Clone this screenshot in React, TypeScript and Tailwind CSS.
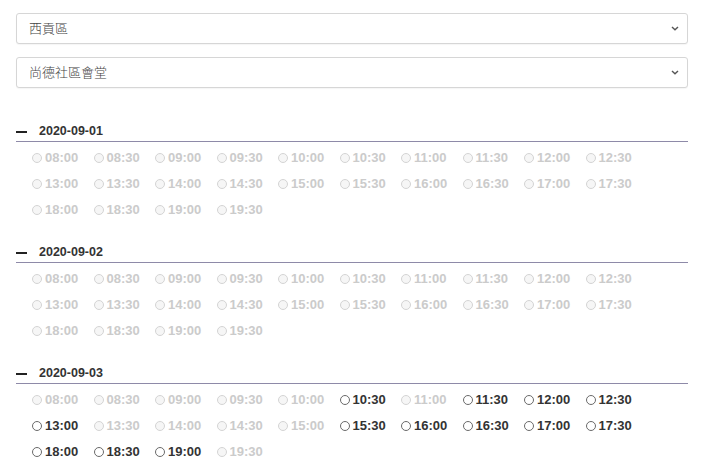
const times = [
  "08:00", "08:30", "09:00", "09:30", "10:00", "10:30", "11:00", "11:30", "12:00", "12:30",
  "13:00", "13:30", "14:00", "14:30", "15:00", "15:30", "16:00", "16:30", "17:00", "17:30",
  "18:00", "18:30", "19:00", "19:30",
];

const days = [
  { date: "2020-09-01", open: [] as string[] },
  { date: "2020-09-02", open: [] as string[] },
  {
    date: "2020-09-03",
    open: ["10:30", "11:30", "12:00", "12:30", "13:00", "15:30", "16:00", "16:30", "17:00", "17:30", "18:00", "18:30", "19:00"],
  },
];

function Picker({ label }: { label: string }) {
  return (
    <div className="flex h-[31px] items-center justify-between rounded-[3px] border border-[#d6d6d6] bg-white pl-3 pr-[5px] shadow-[0_1px_1px_rgba(0,0,0,0.04)]">
      <span className="text-[13px] font-light text-[#444]">{label}</span>
      <svg width="8" height="5" viewBox="0 0 8 5" className="mr-[3px]">
        <path d="M1 1l3 2.8L7 1" fill="none" stroke="#555" strokeWidth="1.4" />
      </svg>
    </div>
  );
}

function Slot({ time, enabled }: { time: string; enabled: boolean }) {
  return (
    <label className="flex h-[26px] items-center">
      <span
        className={
          enabled
            ? "mr-[3px] h-[10px] w-[10px] rounded-full border border-[#6a6a6a] bg-white"
            : "mr-[3px] h-[10px] w-[10px] rounded-full border border-[#d4d4d4] bg-[#f6f6f6]"
        }
      />
      <span className={enabled ? "text-[13px] font-bold text-[#333]" : "text-[13px] font-bold text-[#cbcbcb]"}>
        {time}
      </span>
    </label>
  );
}

export default function App() {
  return (
    <div className="min-h-[471px] w-[723px] bg-white pt-[13px] font-['Liberation_Sans','Noto_Sans_CJK_TC',sans-serif]">
      <div className="ml-4 w-[672px]">
        <div className="flex flex-col gap-[13px]">
          <Picker label="西貢區" />
          <Picker label="尚德社區會堂" />
        </div>

        <div className="mt-[34px] flex flex-col gap-5">
          {days.map((d) => (
            <section key={d.date}>
              <div className="flex h-5 items-center border-b border-[#8e8aa8]">
                <span className="mr-3 mt-[1px] h-[2px] w-[11px] bg-[#222]" />
                <span className="text-[12.5px] font-bold text-[#333]">{d.date}</span>
              </div>
              <div className="grid grid-cols-[repeat(10,61.5px)] pl-4 pt-[3px]">
                {times.map((t) => (
                  <Slot key={t} time={t} enabled={d.open.includes(t)} />
                ))}
              </div>
            </section>
          ))}
        </div>
      </div>
    </div>
  );
}
